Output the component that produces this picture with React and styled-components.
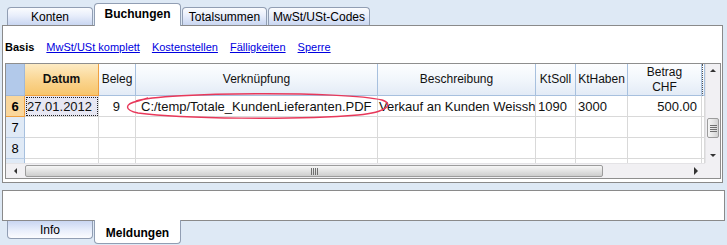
import styled, { createGlobalStyle } from "styled-components";

const GlobalStyle = createGlobalStyle`
  html, body { margin: 0; padding: 0; background: #dee9f5; }
  body { font-family: "Liberation Sans", Arial, sans-serif; color: #000; }
`;

const COLS = "19px 74px 37px 242px 158px 40px 52px 74px 3px";

export default function App() {
    return (
        <Page>
            <GlobalStyle />
            <TopTabs>
                <Tab $w={86}>Konten</Tab>
                <Tab $w={87} $active>Buchungen</Tab>
                <Tab $w={85}>Totalsummen</Tab>
                <Tab $w={102}>MwSt/USt-Codes</Tab>
            </TopTabs>

            <Panel>
                <SubNav>
                    <SubCurrent>Basis</SubCurrent>
                    <SubLink>MwSt/USt komplett</SubLink>
                    <SubLink>Kostenstellen</SubLink>
                    <SubLink>Fälligkeiten</SubLink>
                    <SubLink>Sperre</SubLink>
                </SubNav>

                <GridFrame>
                    <TableArea>
                        <Row $head>
                            <Corner />
                            <HeadCell $hot>Datum</HeadCell>
                            <HeadCell>Beleg</HeadCell>
                            <HeadCell>Verknüpfung</HeadCell>
                            <HeadCell>Beschreibung</HeadCell>
                            <HeadCell>KtSoll</HeadCell>
                            <HeadCell>KtHaben</HeadCell>
                            <HeadCell>Betrag<br />CHF</HeadCell>
                            <HeadCell $dots />
                        </Row>
                        <Row>
                            <RowNum $hot>6</RowNum>
                            <Cell $focus>27.01.2012</Cell>
                            <Cell $right $padRight={15}>9</Cell>
                            <Cell $pad={5}>C:/temp/Totale_KundenLieferanten.PDF</Cell>
                            <Cell $pad={1}>Verkauf an Kunden Weissh</Cell>
                            <Cell>1090</Cell>
                            <Cell>3000</Cell>
                            <Cell $right>500.00</Cell>
                            <Cell />
                        </Row>
                        {["7", "8", ""].map((n) => (
                            <Row key={n}>
                                <RowNum>{n}</RowNum>
                                <Cell /><Cell /><Cell /><Cell /><Cell /><Cell /><Cell /><Cell />
                            </Row>
                        ))}
                        <Marker width="266" height="30" viewBox="0 0 266 30">
                            <path
                                d="M12 11 C 40 2, 222 1, 258 10 C 270 14, 264 22, 234 25 C 172 30, 58 29, 14 23 C 0 20, 0 14, 14 11 L 24 8"
                                fill="none"
                                stroke="#e8385a"
                                strokeWidth="1.4"
                            />
                        </Marker>
                    </TableArea>

                    <VScroll>
                        <ArrowBtn><Arrow $dir="up" /></ArrowBtn>
                        <VThumb><Grip $vertical /></VThumb>
                        <Spacer />
                        <ArrowBtn><Arrow $dir="down" /></ArrowBtn>
                    </VScroll>

                    <HScroll>
                        <ArrowBtn $h><Arrow $dir="left" /></ArrowBtn>
                        <HThumb><Grip /></HThumb>
                        <Spacer />
                        <ArrowBtn $h><Arrow $dir="right" /></ArrowBtn>
                    </HScroll>
                    <ScrollCorner />
                </GridFrame>
            </Panel>

            <MessagePanel />
            <BottomTabs>
                <BottomTab $w={86}>Info</BottomTab>
                <BottomTab $w={87} $active>Meldungen</BottomTab>
            </BottomTabs>
        </Page>
    );
}

const Page = styled.div`
    width: 727px;
    height: 245px;
    display: flex;
    flex-direction: column;
    overflow: hidden;
`;

const TopTabs = styled.div`
    height: 25px;
    display: flex;
    align-items: flex-end;
    gap: 1px;
    padding-left: 7px;
`;

const Tab = styled.div`
    position: relative;
    z-index: ${(p) => (p.$active ? 2 : 0)};
    box-sizing: border-box;
    width: ${(p) => p.$w}px;
    height: ${(p) => (p.$active ? 23 : 18)}px;
    margin-bottom: ${(p) => (p.$active ? -1 : 0)}px;
    display: flex;
    align-items: center;
    justify-content: center;
    padding-bottom: ${(p) => (p.$active ? 2 : 0)}px;
    border: 1px solid #919eb3;
    border-bottom: none;
    border-radius: 4px 4px 0 0;
    background: ${(p) =>
        p.$active
            ? "#ffffff"
            : "linear-gradient(#fbfcfe, #e8eefb 45%, #c9d6f1)"};
    font-size: 12px;
    font-weight: ${(p) => (p.$active ? "bold" : "normal")};
`;

const Panel = styled.div`
    box-sizing: border-box;
    height: 158px;
    margin: 0 4px 0 2px;
    border: 1px solid #8a8a8a;
    background: #fff;
    display: flex;
    flex-direction: column;
`;

const SubNav = styled.div`
    height: 37px;
    display: flex;
    align-items: center;
    gap: 11px;
    padding: 4px 0 0 2px;
    box-sizing: border-box;
    font-size: 11px;
`;

const SubCurrent = styled.span`
    font-weight: bold;
    margin-right: 1px;
`;

const SubLink = styled.span`
    color: #0000e0;
    text-decoration: underline;
    margin-right: 1px;
`;

const GridFrame = styled.div`
    position: relative;
    box-sizing: border-box;
    height: 116px;
    margin: 0 1px 0 2px;
    border: 1px solid #8e8e8e;
    display: grid;
    grid-template-columns: 1fr 15px;
    grid-template-rows: 99px 15px;
`;

const TableArea = styled.div`
    position: relative;
    overflow: hidden;
    background: #fff;
`;

const Row = styled.div`
    display: grid;
    grid-template-columns: ${COLS};
    height: ${(p) => (p.$head ? 32 : 21)}px;
`;

const Corner = styled.div`
    background: #b2c9ea;
    border-right: 1px solid #9fb8da;
    border-bottom: 1px solid #9fb8da;
`;

const HeadCell = styled.div`
    box-sizing: border-box;
    display: flex;
    align-items: center;
    justify-content: center;
    text-align: center;
    line-height: 15px;
    font-size: 12px;
    font-weight: ${(p) => (p.$hot ? "bold" : "normal")};
    color: #111;
    background: ${(p) =>
        p.$hot
            ? "linear-gradient(#fdebc4, #fad48e 55%, #f7c56c)"
            : "linear-gradient(#fdfeff, #f0f5fb 55%, #e3ebf6)"};
    border-right: 1px solid ${(p) => (p.$hot ? "#f0a040" : "#a7c0de")};
    border-bottom: 1px solid ${(p) => (p.$hot ? "#f0a040" : "#a7c0de")};
    border-left: ${(p) => (p.$dots ? "1px dotted #555" : "none")};
`;

const RowNum = styled.div`
    box-sizing: border-box;
    display: flex;
    align-items: center;
    justify-content: center;
    font-size: 13px;
    font-weight: ${(p) => (p.$hot ? "bold" : "normal")};
    background: ${(p) => (p.$hot ? "#fad79c" : "#e0eaf6")};
    border-right: 1px solid ${(p) => (p.$hot ? "#f0a040" : "#a7c0de")};
    border-bottom: 1px solid ${(p) => (p.$hot ? "#f0a040" : "#b9cce4")};
`;

const Cell = styled.div`
    box-sizing: border-box;
    display: flex;
    align-items: center;
    justify-content: ${(p) => (p.$right ? "flex-end" : "flex-start")};
    padding: 0 ${(p) => (p.$right ? p.$padRight ?? 4 : 0)}px 0 ${(p) => p.$pad ?? 2}px;
    overflow: hidden;
    white-space: nowrap;
    font-size: 13px;
    color: #111;
    border-right: 1px solid #d9d9d9;
    border-bottom: 1px solid #d9d9d9;
    background: ${(p) => (p.$focus ? "#e7e7f3" : "#fff")};
    outline: ${(p) => (p.$focus ? "1px dotted #222" : "none")};
    outline-offset: -2px;
`;

const Marker = styled.svg`
    position: absolute;
    left: 118px;
    top: 26px;
    pointer-events: none;
`;

const scrollBg = "#f1f0f3";

const VScroll = styled.div`
    grid-column: 2;
    grid-row: 1;
    display: flex;
    flex-direction: column;
    background: ${scrollBg};
    border-left: 1px solid #e4e3e6;
`;

const HScroll = styled.div`
    grid-column: 1;
    grid-row: 2;
    display: flex;
    align-items: stretch;
    background: ${scrollBg};
    border-top: 1px solid #e4e3e6;
`;

const ScrollCorner = styled.div`
    grid-column: 2;
    grid-row: 2;
    background: ${scrollBg};
`;

const ArrowBtn = styled.div`
    flex: 0 0 ${(p) => (p.$h ? 19 : 15)}px;
    display: flex;
    align-items: center;
    justify-content: center;
`;

const Arrow = styled.span`
    width: 0;
    height: 0;
    border: 3px solid transparent;
    ${(p) => p.$dir === "up" && "border-bottom: 3px solid #333; border-top: 0; margin-top: -3px;"}
    ${(p) => p.$dir === "down" && "border-top: 3px solid #333; border-bottom: 0;"}
    ${(p) => p.$dir === "left" && "border-right: 3px solid #333; border-left: 0;"}
    ${(p) => p.$dir === "right" && "border-left: 4px solid #333; border-right: 0; border-top-width: 4px; border-bottom-width: 4px;"}
`;

const Spacer = styled.div`
    flex: 1;
`;

const VThumb = styled.div`
    box-sizing: border-box;
    height: 20px;
    margin: 39px 1px 0;
    border: 1px solid #9c9c9c;
    border-radius: 2px;
    background: linear-gradient(90deg, #f6f6f6, #e2e2e2 60%, #d2d2d2);
    display: flex;
    align-items: center;
    justify-content: center;
`;

const HThumb = styled.div`
    box-sizing: border-box;
    width: 578px;
    margin: 1px 0;
    border: 1px solid #9c9c9c;
    border-radius: 2px;
    background: linear-gradient(#f6f6f6, #e0e0e0 55%, #cdcdcd);
    display: flex;
    align-items: center;
    justify-content: center;
`;

const Grip = styled.span`
    width: 7px;
    height: 7px;
    background: repeating-linear-gradient(
        ${(p) => (p.$vertical ? "180deg" : "90deg")},
        #6f6f6f 0 1px,
        transparent 1px 2px
    );
`;

const MessagePanel = styled.div`
    box-sizing: border-box;
    height: 31px;
    margin: 7px 2px 0 2px;
    border: 1px solid #8a8a8a;
    background: #fff;
`;

const BottomTabs = styled.div`
    display: flex;
    align-items: flex-start;
    gap: 1px;
    padding-left: 7px;
`;

const BottomTab = styled.div`
    position: relative;
    z-index: ${(p) => (p.$active ? 2 : 0)};
    box-sizing: border-box;
    width: ${(p) => p.$w}px;
    height: ${(p) => (p.$active ? 24 : 18)}px;
    margin-top: ${(p) => (p.$active ? -1 : 0)}px;
    display: flex;
    align-items: center;
    justify-content: center;
    padding-top: ${(p) => (p.$active ? 3 : 0)}px;
    border: 1px solid #919eb3;
    border-top: none;
    border-radius: 0 0 4px 4px;
    background: ${(p) =>
        p.$active ? "#ffffff" : "linear-gradient(#c9d6f1, #e8eefb 55%, #fbfcfe)"};
    font-size: 12px;
    font-weight: ${(p) => (p.$active ? "bold" : "normal")};
`;
